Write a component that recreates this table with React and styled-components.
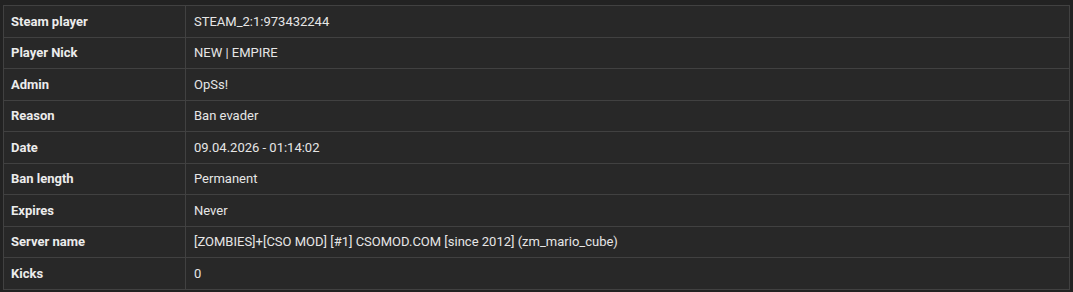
import React from "react";
import styled, { createGlobalStyle } from "styled-components";

const Global = createGlobalStyle`
  html, body { margin: 0; padding: 0; background: #222222; }
  body { font-family: Roboto, "Liberation Sans", Arial, sans-serif; }
`;

const Wrap = styled.div`
  padding: 5px 3px 0 3px;
`;

const Table = styled.table`
  width: 1067px;
  border-collapse: collapse;
  background: #282828;
  border: 1px solid #414141;
  font-size: 13px;
  color: #e6e6e6;
`;

const Row = styled.tr`
  height: 31.5px;
`;

const Label = styled.td`
  width: 166px;
  padding: 0 8px 0 7px;
  border: 1px solid #414141;
  font-weight: 700;
  color: #ececec;
  vertical-align: middle;
`;

const Value = styled.td`
  padding: 0 8px 0 8px;
  border: 1px solid #414141;
  color: #e6e6e6;
  vertical-align: middle;
`;

const rows = [
  ["Steam player", "STEAM_2:1:973432244"],
  ["Player Nick", "NEW | EMPIRE"],
  ["Admin", "OpSs!"],
  ["Reason", "Ban evader"],
  ["Date", "09.04.2026 - 01:14:02"],
  ["Ban length", "Permanent"],
  ["Expires", "Never"],
  ["Server name", "[ZOMBIES]+[CSO MOD] [#1] CSOMOD.COM [since 2012] (zm_mario_cube)"],
  ["Kicks", "0"],
];

export default function App() {
  return (
    <>
      <Global />
      <Wrap>
        <Table>
          <tbody>
            {rows.map(([k, v]) => (
              <Row key={k}>
                <Label>{k}</Label>
                <Value>{v}</Value>
              </Row>
            ))}
          </tbody>
        </Table>
      </Wrap>
    </>
  );
}
